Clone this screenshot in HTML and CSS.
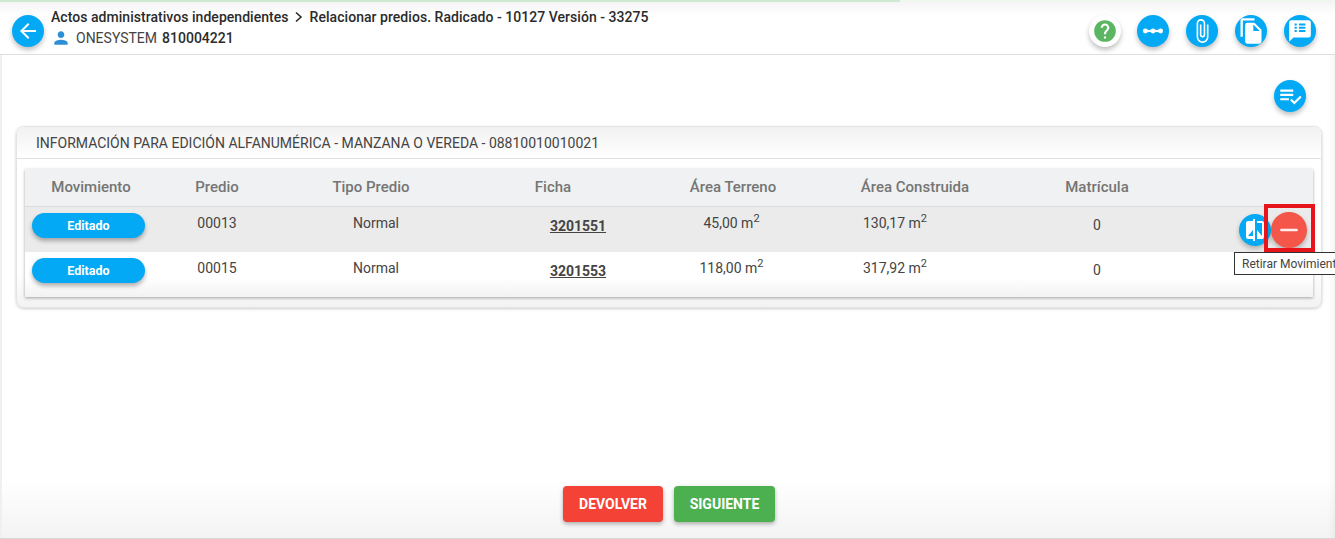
FILE: index.html
```html
<!DOCTYPE html>
<html lang="es">
<head>
  <meta charset="UTF-8">
  <title>Relacionar predios</title>
  <link rel="stylesheet" href="styles.css">
</head>
<body>
  <div class="progreso"></div>
  <header class="cabecera">
    <button class="circulo volver">
      <svg viewBox="0 0 24 24" width="24" height="24"><path fill="#fff" d="M20 11H7.830l5.590-5.590L12 4l-8 8 8 8 1.410-1.410L7.830 13H20z"/></svg>
    </button>
    <div class="titulos">
      <div class="ruta">Actos administrativos independientes <svg class="flecha" viewBox="0 0 10 12" width="10" height="12"><path fill="none" stroke="#222" stroke-width="1.500" d="M2 1.500 7 6l-5 4.500"/></svg> Relacionar predios. Radicado - 10127 Versión - 33275</div>
      <div class="usuario">
        <svg viewBox="0 0 24 24" width="20" height="20"><path fill="#2c8fd6" d="M12 12c2.200 0 4-1.800 4-4s-1.800-4-4-4-4 1.800-4 4 1.800 4 4 4zm0 2c-2.700 0-8 1.300-8 4v2h16v-2c0-2.700-5.300-4-8-4z"/></svg>
        <span>ONESYSTEM</span> <strong>810004221</strong>
      </div>
    </div>
    <div class="acciones">
      <button class="circulo ayuda">
        <svg viewBox="0 0 24 24" width="26" height="26"><path fill="#5cb562" d="M12 2a10 10 0 1 0 0 20 10 10 0 0 0 0-20zm1 17h-2v-2h2zm2.070-7.750-.900.920C13.450 12.900 13 13.500 13 15h-2v-.500c0-1.100.450-2.100 1.170-2.830l1.240-1.260A2 2 0 1 0 10 9H8a4 4 0 1 1 8 0c0 .880-.360 1.680-.930 2.250z"/></svg>
      </button>
      <button class="circulo">
        <svg viewBox="0 0 24 24" width="26" height="26"><path fill="none" stroke="#fff" stroke-width="2" d="M4 12h16"/><circle cx="5" cy="12" r="2.300" fill="#fff"/><circle cx="12" cy="12" r="2.300" fill="#fff"/><circle cx="19" cy="12" r="2.300" fill="#fff"/></svg>
      </button>
      <button class="circulo">
        <svg viewBox="0 0 24 24" width="26" height="26"><path fill="#fff" d="M16.500 6v11.500a4 4 0 0 1-8 0V5a2.500 2.500 0 0 1 5 0v10.500a1 1 0 0 1-2 0V6H10v9.500a2.500 2.500 0 0 0 5 0V5a4 4 0 0 0-8 0v12.500a5.500 5.500 0 0 0 11 0V6z"/></svg>
      </button>
      <button class="circulo">
        <svg viewBox="0 0 24 24" width="28" height="28"><path fill="#fff" d="M15 1H5a2 2 0 0 0-2 2v14h2V3h10zm0 4 6 6v10a2 2 0 0 1-2 2H9a2 2 0 0 1-2-2V7a2 2 0 0 1 2-2zm-1 7h5.500L14 6.500z"/></svg>
      </button>
      <button class="circulo">
        <svg viewBox="0 0 24 24" width="26" height="26"><path fill="#fff" d="M20 2H4a2 2 0 0 0-2 2v18l4-4h14a2 2 0 0 0 2-2V4a2 2 0 0 0-2-2zM9 13H7v-2h2zm0-3H7V8h2zm0-3H7V5h2zm8 6h-6v-2h6zm0-3h-6V8h6zm0-3h-6V5h6z"/></svg>
      </button>
    </div>
  </header>

  <main class="contenido">
    <div class="barra-lista">
      <button class="circulo">
        <svg viewBox="0 0 24 24" width="26" height="26"><path fill="#fff" d="M3 6h12v2H3zm0 4h12v2H3zm0 4h8v2H3zm18.300-2.300 1.400 1.400-6.700 6.700-3.900-3.900 1.400-1.400 2.500 2.500z"/></svg>
      </button>
    </div>

    <section class="tarjeta">
      <h2 class="tarjeta-titulo">INFORMACIÓN PARA EDICIÓN ALFANUMÉRICA - MANZANA O VEREDA - 08810010010021</h2>
      <div class="tabla">
        <div class="fila encabezado">
          <div>Movimiento</div><div>Predio</div><div>Tipo Predio</div><div>Ficha</div><div>Área Terreno</div><div>Área Construida</div><div>Matrícula</div><div></div>
        </div>
        <div class="fila gris">
          <div class="celda-mov"><span class="pildora">Editado</span></div>
          <div>00013</div>
          <div class="tipo">Normal</div>
          <div class="ficha"><a href="#">3201551</a></div>
          <div class="terreno">45,00 m<sup>2</sup></div>
          <div class="construida">130,17 m<sup>2</sup></div>
          <div class="matricula">0</div>
          <div class="botones">
            <button class="circulo mini">
              <svg viewBox="0 0 24 24" width="24" height="24"><path fill="#fff" d="M10 3H5a2 2 0 0 0-2 2v14a2 2 0 0 0 2 2h5v2h2V1h-2zm0 15H5l5-6zm9-15h-5v2h5v13l-5-6v9h5a2 2 0 0 0 2-2V5a2 2 0 0 0-2-2z"/></svg>
            </button>
            <button class="circulo retirar">
              <svg viewBox="0 0 24 24" width="26" height="26"><path fill="#fdeeee" d="M5 10.800h14a1.200 1.200 0 0 1 0 2.400H5a1.200 1.200 0 0 1 0-2.400z"/></svg>
            </button>
          </div>
        </div>
        <div class="fila">
          <div class="celda-mov"><span class="pildora">Editado</span></div>
          <div>00015</div>
          <div class="tipo">Normal</div>
          <div class="ficha"><a href="#">3201553</a></div>
          <div class="terreno">118,00 m<sup>2</sup></div>
          <div class="construida">317,92 m<sup>2</sup></div>
          <div class="matricula">0</div>
          <div></div>
        </div>
      </div>
    </section>

    <div class="pie">
      <button class="boton rojo">DEVOLVER</button>
      <button class="boton verde">SIGUIENTE</button>
    </div>
  </main>

  <div class="marca"></div>
  <div class="tooltip">Retirar Movimiento</div>
</body>
</html>
```

FILE: styles.css
```css
html, body {
  height: 100%;
}
body {
  margin: 0;
  font-family: Roboto, sans-serif;
  color: #333;
  background: #fff;
  overflow: hidden;
  position: relative;
  display: flex;
  flex-direction: column;
}
button {
  font-family: inherit;
  border: none;
  padding: 0;
  cursor: pointer;
}
.progreso {
  position: absolute;
  top: 0;
  left: 0;
  width: 100%;
  height: 2px;
  background: linear-gradient(90deg, #cfe8d0 900px, #eef6ee 900px);
}
.cabecera {
  height: 54px;
  flex: none;
  display: flex;
  align-items: center;
  padding: 0 19px 0 12px;
  border-bottom: 1px solid #dcdfdc;
  background: linear-gradient(#f3f3f3, #fff 30%);
}
.circulo {
  width: 32px;
  height: 32px;
  border-radius: 50%;
  background: #03a9f4;
  display: flex;
  align-items: center;
  justify-content: center;
  flex: none;
  box-shadow: 0 3px 5px rgba(0, 0, 0, 0.25);
}
.volver {
  margin-top: 7px;
}
.titulos {
  margin-left: 7px;
  flex: 1;
  align-self: flex-start;
  padding-top: 8px;
}
.ruta {
  font-size: 14px;
  font-weight: 500;
  line-height: 18px;
  letter-spacing: 0.04px;
  color: #2b2b2b;
}
.flecha {
  margin: 0 2px;
  vertical-align: -1px;
}
.usuario {
  display: flex;
  align-items: center;
  font-size: 14px;
  line-height: 20px;
  margin-top: 2px;
  gap: 5px;
  color: #444;
}
.usuario strong {
  font-weight: 500;
  color: #2b2b2b;
}
.acciones {
  display: flex;
  gap: 17px;
  margin-top: 8px;
}
.ayuda {
  background: #fff;
  margin-right: -1px;
}
.contenido {
  flex: 1;
  display: flex;
  flex-direction: column;
  padding: 25px 13px 0 16px;
  background: linear-gradient(#fff 88%, #f3f3f3);
  border-bottom: 1px solid #d8d8d8;
  box-shadow: inset 2px 0 0 #eef2ee, inset -10px 0 10px -10px rgba(0, 0, 0, 0.08);
}
.barra-lista {
  display: flex;
  justify-content: flex-end;
  padding-right: 16px;
  height: 46px;
}
.tarjeta {
  border: 1px solid #e4e4e4;
  border-radius: 8px;
  background: linear-gradient(#fff 80%, #f2f2f2);
  box-shadow: 0 1px 3px rgba(0, 0, 0, 0.2);
  padding-bottom: 10px;
}
.tarjeta-titulo {
  margin: 0;
  font-size: 14px;
  font-weight: 400;
  line-height: 29px;
  padding-top: 2px;
  color: #444;
  padding-left: 19px;
  border-bottom: 1px solid #e2e2e2;
  background: linear-gradient(#f1f1f1, #fff);
  border-radius: 8px 8px 0 0;
}
.tabla {
  margin: 10px 8px 0;
  box-shadow: 0 1px 3px rgba(0, 0, 0, 0.35);
  background: linear-gradient(#fff 85%, #f2f2f2);
}
.fila {
  display: grid;
  grid-template-columns: 132px 120px 188px 176px 184px 180px 184px 124px;
  height: 45px;
  font-size: 14px;
  color: #444;
  text-align: center;
  line-height: 32px;
}
.encabezado {
  height: 37px;
  line-height: 37px;
  background: #eff1f2;
  color: #757575;
  font-size: 15px;
  font-weight: 500;
  border-bottom: 1px solid #dcdcdc;
}
.gris {
  background: #ebebeb;
}
.celda-mov {
  line-height: normal;
  padding-top: 6px;
}
.pildora {
  display: block;
  width: 113px;
  height: 25px;
  margin-left: 7px;
  line-height: 25px;
  border-radius: 13px;
  background: #03a9f4;
  color: #fff;
  font-size: 12.500px;
  font-weight: 700;
  box-shadow: 0 3px 4px rgba(0, 0, 0, 0.3);
}
.tipo {
  padding-left: 10px;
}
.ficha {
  padding: 3px 0 0 50px;
}
.ficha a {
  color: #444;
  font-weight: 700;
}
.terreno {
  padding-right: 3px;
}
.construida {
  padding-right: 40px;
}
.matricula {
  padding-top: 2px;
}
sup {
  font-size: 11px;
  line-height: 0;
}
.botones {
  display: flex;
  justify-content: flex-end;
  align-items: center;
  padding: 0 6px 0 0;
  height: 45px;
}
.retirar {
  width: 36px;
  height: 36px;
  background: #f5564a;
  position: relative;
}
.marca {
  position: absolute;
  left: 1264px;
  top: 204px;
  width: 51px;
  height: 48px;
  box-sizing: border-box;
  border: 4px solid #e8141c;
}
.tooltip {
  position: absolute;
  left: 1234px;
  top: 252px;
  height: 23px;
  line-height: 22px;
  padding: 0 7px;
  box-sizing: border-box;
  background: #fff;
  border: 1px solid #333;
  font-size: 12px;
  color: #444;
  white-space: nowrap;
}
.pie {
  margin-top: auto;
  display: flex;
  justify-content: center;
  gap: 11px;
  padding: 0 0 16px;
}
.boton {
  height: 36px;
  border-radius: 4px;
  color: #fff;
  font-size: 14px;
  font-weight: 700;
  box-shadow: 0 2px 4px rgba(0, 0, 0, 0.3);
}
.rojo {
  width: 100px;
  background: #f44336;
}
.verde {
  width: 101px;
  background: #4caf50;
}
```
